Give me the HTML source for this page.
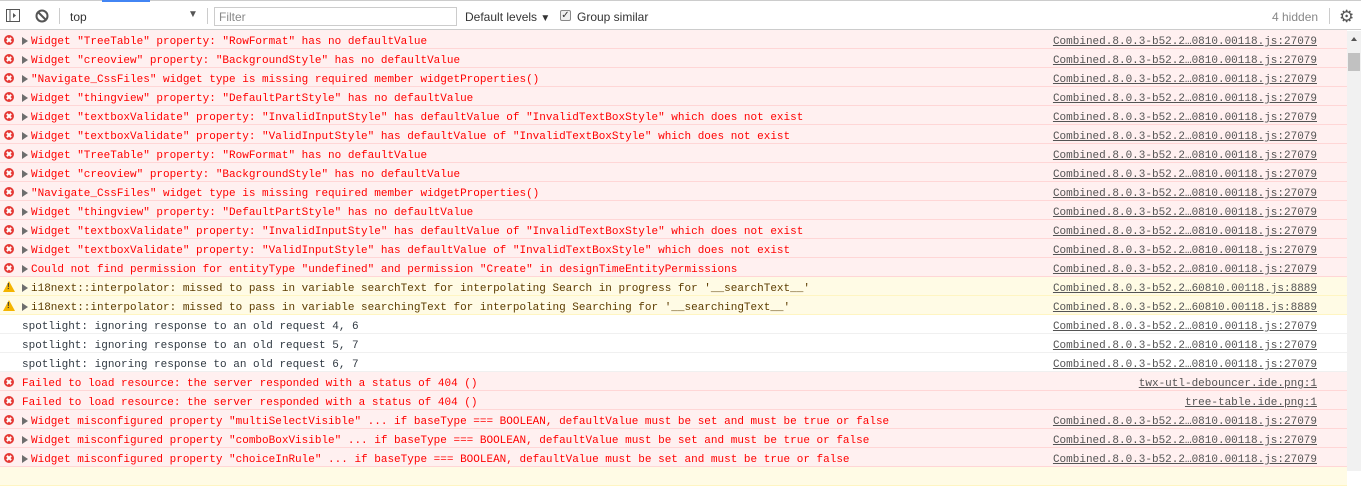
<!DOCTYPE html>
<html><head><meta charset="utf-8"><style>
*{margin:0;padding:0;box-sizing:border-box}
html,body{width:1361px;height:471px;overflow:hidden;background:#fff;font-family:"Liberation Sans",sans-serif}
.tb{position:absolute;left:0;top:0;width:1361px;height:30px;border-top:1px solid #ccc;border-bottom:1px solid #ccc;background:#fff;font-size:12px;color:#333}
.tab{position:absolute;left:102px;top:-1px;width:48px;height:2px;background:#4285f4}
.tb .a{position:absolute}
.div{position:absolute;top:7px;width:1px;height:16px;background:#ccc}
.rows{position:absolute;left:0;top:30px;width:1347px}
.r{position:relative;height:19px;border-bottom:1px solid #fff;font-family:"Liberation Mono",monospace;font-size:11px;line-height:18px;white-space:pre}
.e{background:#fff0f0;color:#f00;border-color:#ffd6d6}
.w{background:#fffbe5;color:#5c3c00;border-color:#fff5c2}
.n{background:#fff;color:#303942;border-color:#f0f0f0}
.r .t{position:absolute;left:31px;top:3px}
.r .t.nt{left:22px}
.r .tri{position:absolute;left:22px;top:7px;width:0;height:0;border-top:4px solid transparent;border-bottom:4px solid transparent;border-left:6px solid #6e6e6e}
.r .l{position:absolute;right:30px;top:3px;color:#545454;text-decoration:underline}
.ic{position:absolute;left:4px;top:5px;width:10px;height:10px;border-radius:50%;background:#e53935}
.ic:before,.ic:after{content:"";position:absolute;left:4px;top:2px;width:2px;height:6px;background:#fff;transform:rotate(45deg)}
.ic:after{transform:rotate(-45deg)}
.wi{position:absolute;left:3px;top:4px;width:0;height:0;border-left:6px solid transparent;border-right:6px solid transparent;border-bottom:11px solid #f4b400}
.wi:after{content:"!";position:absolute;left:-2px;top:1px;font:bold 8px "Liberation Sans",sans-serif;color:#333}
.sb{position:absolute;left:1347px;top:31px;width:14px;height:440px;background:#f1f1f1}
</style></head><body>
<div class="tb">
<div class="tab"></div>
<svg class="a" style="left:6px;top:8px" width="14" height="13" viewBox="0 0 14 13"><rect x="0.5" y="0.5" width="13" height="12" fill="none" stroke="#555"/><line x1="4" y1="1" x2="4" y2="12" stroke="#555"/><path d="M7 4l3 2.5-3 2.5z" fill="#555"/></svg>
<svg class="a" style="left:35px;top:8px" width="14" height="14" viewBox="0 0 14 14"><circle cx="7" cy="7" r="5.5" fill="none" stroke="#555" stroke-width="2"/><line x1="3" y1="3" x2="11" y2="11" stroke="#555" stroke-width="2"/></svg>
<div class="div" style="left:59px"></div>
<div class="a" style="left:70px;top:9px">top</div>
<div class="a" style="left:188px;top:8px;font-size:10px;color:#555">▼</div>
<div class="div" style="left:207px"></div>
<div class="a" style="left:214px;top:6px;width:243px;height:19px;border:1px solid #ccc;padding:2px 4px;color:#888">Filter</div>
<div class="a" style="left:465px;top:9px">Default levels <span style="font-size:10px">▼</span></div>
<div class="a" style="left:560px;top:9px;width:11px;height:11px;border:1px solid #888;border-radius:2px;background:#eee;font-size:10px;line-height:9px;text-align:center;color:#333">✓</div>
<div class="a" style="left:577px;top:9px">Group similar</div>
<div class="a" style="left:1272px;top:9px;color:#888">4 hidden</div>
<div class="div" style="left:1329px"></div>
<div class="a" style="left:1339px;top:6px;font-size:17px;color:#555">⚙</div>
</div>
<div class="rows">
<div class="r e"><i class="ic"></i><i class="tri"></i><span class="t">Widget "TreeTable" property: "RowFormat" has no defaultValue</span><span class="l">Combined.8.0.3-b52.2…0810.00118.js:27079</span></div>
<div class="r e"><i class="ic"></i><i class="tri"></i><span class="t">Widget "creoview" property: "BackgroundStyle" has no defaultValue</span><span class="l">Combined.8.0.3-b52.2…0810.00118.js:27079</span></div>
<div class="r e"><i class="ic"></i><i class="tri"></i><span class="t">"Navigate_CssFiles" widget type is missing required member widgetProperties()</span><span class="l">Combined.8.0.3-b52.2…0810.00118.js:27079</span></div>
<div class="r e"><i class="ic"></i><i class="tri"></i><span class="t">Widget "thingview" property: "DefaultPartStyle" has no defaultValue</span><span class="l">Combined.8.0.3-b52.2…0810.00118.js:27079</span></div>
<div class="r e"><i class="ic"></i><i class="tri"></i><span class="t">Widget "textboxValidate" property: "InvalidInputStyle" has defaultValue of "InvalidTextBoxStyle" which does not exist</span><span class="l">Combined.8.0.3-b52.2…0810.00118.js:27079</span></div>
<div class="r e"><i class="ic"></i><i class="tri"></i><span class="t">Widget "textboxValidate" property: "ValidInputStyle" has defaultValue of "InvalidTextBoxStyle" which does not exist</span><span class="l">Combined.8.0.3-b52.2…0810.00118.js:27079</span></div>
<div class="r e"><i class="ic"></i><i class="tri"></i><span class="t">Widget "TreeTable" property: "RowFormat" has no defaultValue</span><span class="l">Combined.8.0.3-b52.2…0810.00118.js:27079</span></div>
<div class="r e"><i class="ic"></i><i class="tri"></i><span class="t">Widget "creoview" property: "BackgroundStyle" has no defaultValue</span><span class="l">Combined.8.0.3-b52.2…0810.00118.js:27079</span></div>
<div class="r e"><i class="ic"></i><i class="tri"></i><span class="t">"Navigate_CssFiles" widget type is missing required member widgetProperties()</span><span class="l">Combined.8.0.3-b52.2…0810.00118.js:27079</span></div>
<div class="r e"><i class="ic"></i><i class="tri"></i><span class="t">Widget "thingview" property: "DefaultPartStyle" has no defaultValue</span><span class="l">Combined.8.0.3-b52.2…0810.00118.js:27079</span></div>
<div class="r e"><i class="ic"></i><i class="tri"></i><span class="t">Widget "textboxValidate" property: "InvalidInputStyle" has defaultValue of "InvalidTextBoxStyle" which does not exist</span><span class="l">Combined.8.0.3-b52.2…0810.00118.js:27079</span></div>
<div class="r e"><i class="ic"></i><i class="tri"></i><span class="t">Widget "textboxValidate" property: "ValidInputStyle" has defaultValue of "InvalidTextBoxStyle" which does not exist</span><span class="l">Combined.8.0.3-b52.2…0810.00118.js:27079</span></div>
<div class="r e"><i class="ic"></i><i class="tri"></i><span class="t">Could not find permission for entityType "undefined" and permission "Create" in designTimeEntityPermissions</span><span class="l">Combined.8.0.3-b52.2…0810.00118.js:27079</span></div>
<div class="r w"><i class="wi"></i><i class="tri"></i><span class="t">i18next::interpolator: missed to pass in variable searchText for interpolating Search in progress for '__searchText__'</span><span class="l">Combined.8.0.3-b52.2…60810.00118.js:8889</span></div>
<div class="r w"><i class="wi"></i><i class="tri"></i><span class="t">i18next::interpolator: missed to pass in variable searchingText for interpolating Searching for '__searchingText__'</span><span class="l">Combined.8.0.3-b52.2…60810.00118.js:8889</span></div>
<div class="r n"><span class="t nt">spotlight: ignoring response to an old request 4, 6</span><span class="l">Combined.8.0.3-b52.2…0810.00118.js:27079</span></div>
<div class="r n"><span class="t nt">spotlight: ignoring response to an old request 5, 7</span><span class="l">Combined.8.0.3-b52.2…0810.00118.js:27079</span></div>
<div class="r n"><span class="t nt">spotlight: ignoring response to an old request 6, 7</span><span class="l">Combined.8.0.3-b52.2…0810.00118.js:27079</span></div>
<div class="r e"><i class="ic"></i><span class="t nt">Failed to load resource: the server responded with a status of 404 ()</span><span class="l">twx-utl-debouncer.ide.png:1</span></div>
<div class="r e"><i class="ic"></i><span class="t nt">Failed to load resource: the server responded with a status of 404 ()</span><span class="l">tree-table.ide.png:1</span></div>
<div class="r e"><i class="ic"></i><i class="tri"></i><span class="t">Widget misconfigured property "multiSelectVisible" ... if baseType === BOOLEAN, defaultValue must be set and must be true or false</span><span class="l">Combined.8.0.3-b52.2…0810.00118.js:27079</span></div>
<div class="r e"><i class="ic"></i><i class="tri"></i><span class="t">Widget misconfigured property "comboBoxVisible" ... if baseType === BOOLEAN, defaultValue must be set and must be true or false</span><span class="l">Combined.8.0.3-b52.2…0810.00118.js:27079</span></div>
<div class="r e"><i class="ic"></i><i class="tri"></i><span class="t">Widget misconfigured property "choiceInRule" ... if baseType === BOOLEAN, defaultValue must be set and must be true or false</span><span class="l">Combined.8.0.3-b52.2…0810.00118.js:27079</span></div>
<div class="r w"></div>
</div>
<div class="sb"><div style="position:absolute;left:4px;top:6px;border-left:3px solid transparent;border-right:3px solid transparent;border-bottom:4px solid #555"></div><div style="position:absolute;left:1px;top:22px;width:12px;height:18px;background:#c1c1c1"></div></div>
</body></html>
